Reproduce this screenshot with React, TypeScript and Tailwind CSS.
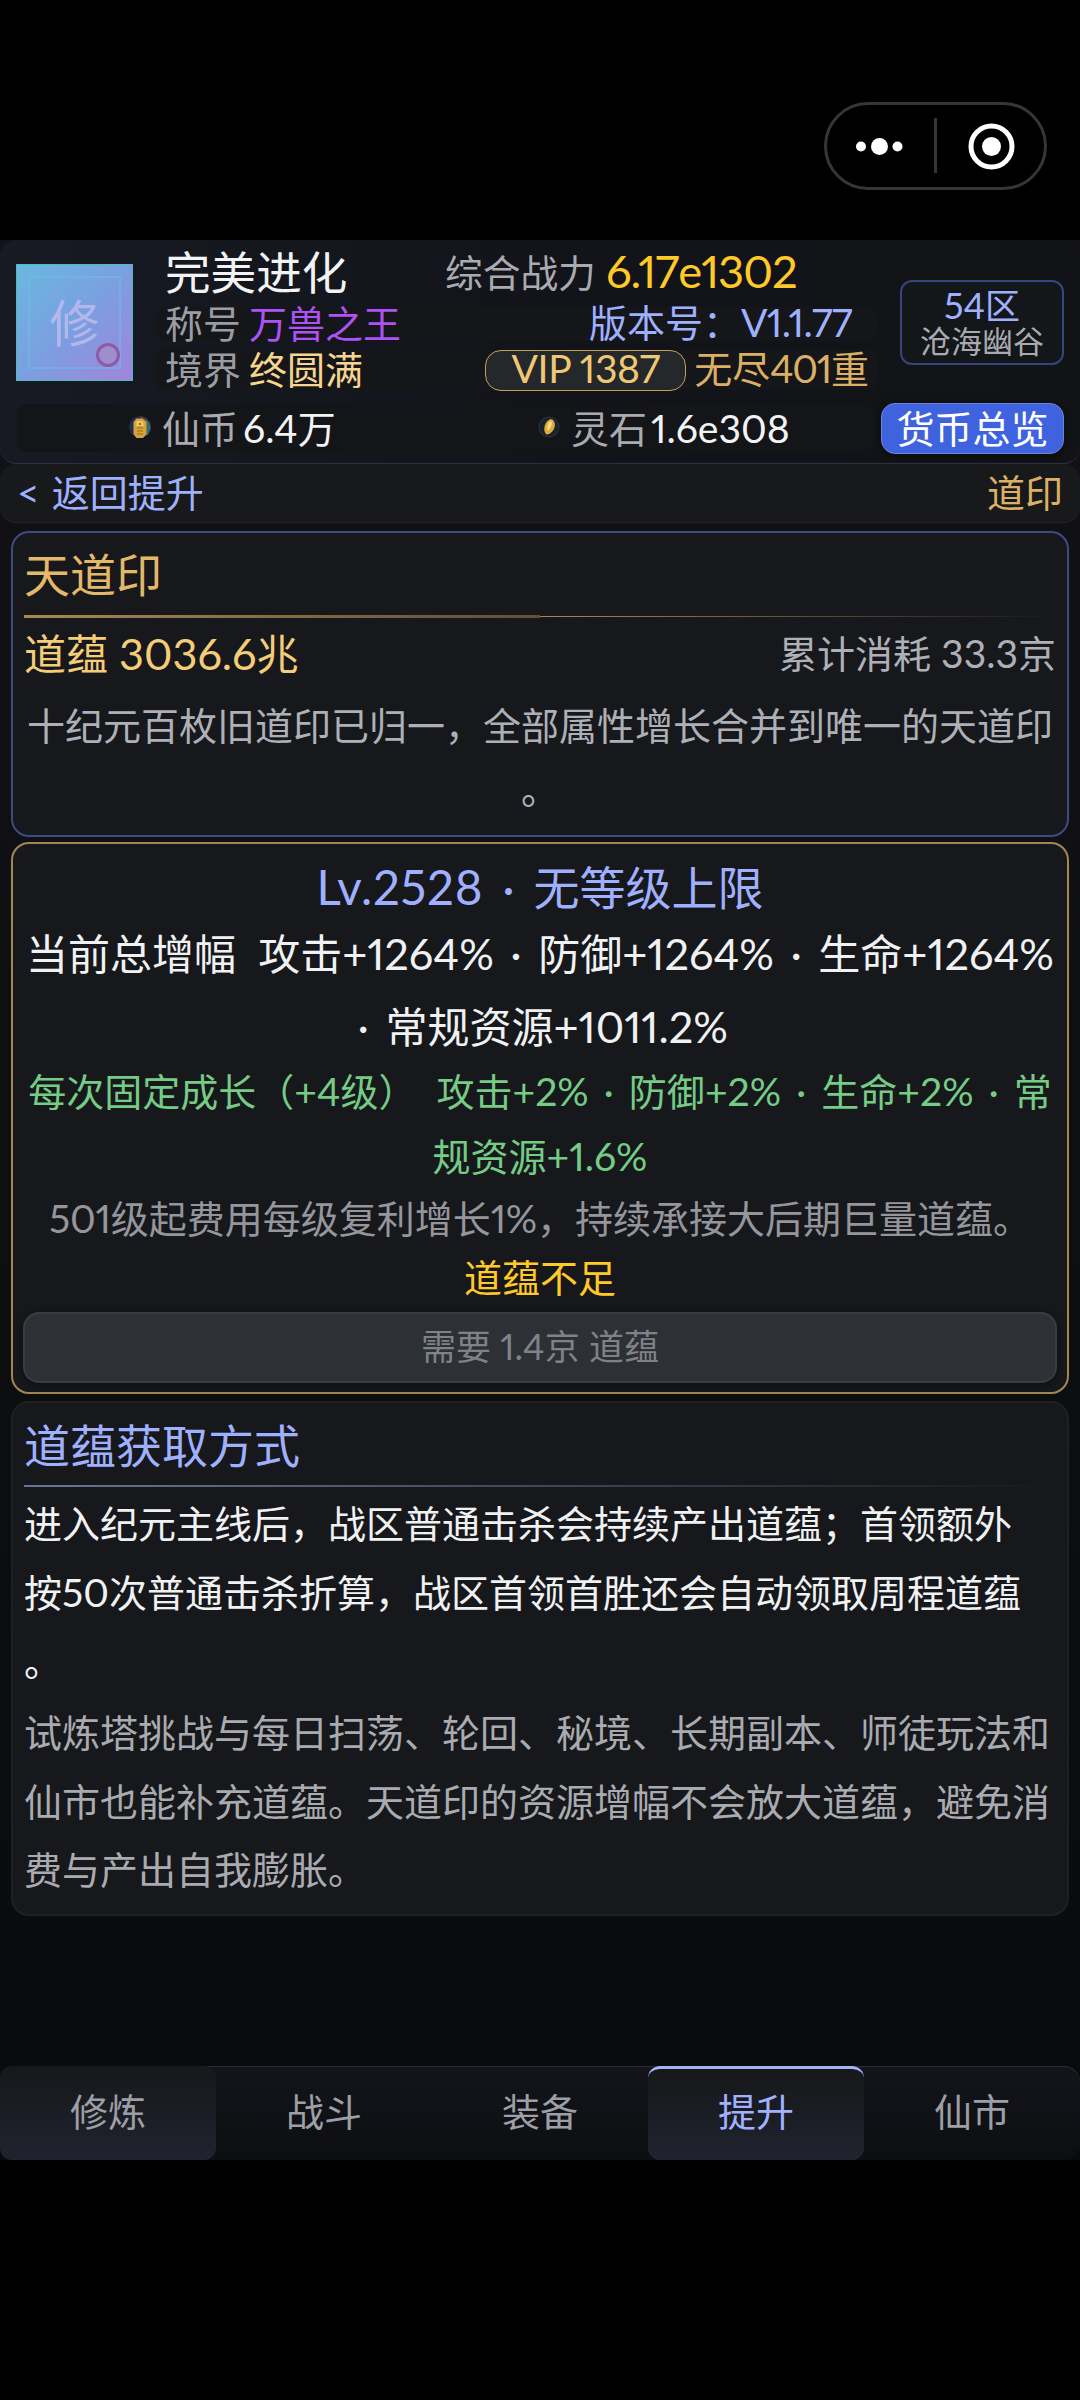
import React from "react";

/** Wraps Latin runs so that they take the Latin face next to Chinese text. */
function Mix({ children, latin = "" }: { children: string; latin?: string }) {
  const parts = children.split(/(·|[\x20-\x7e]+)/);
  return (
    <>
      {parts.map((part, i) => {
        if (part === "·") {
          return (
            <span key={i} className="px-[0.135em] font-[Lato] leading-none">
              ·
            </span>
          );
        }
        return i % 2 === 1 ? (
          <span
            key={i}
            className={`whitespace-pre font-[Lato] text-[1.03em] leading-none proportional-nums ${latin}`}
          >
            {part}
          </span>
        ) : (
          part
        );
      })}
    </>
  );
}

function Line({
  className = "",
  latin,
  children,
}: {
  className?: string;
  latin?: string;
  children: string;
}) {
  return (
    <div className={`whitespace-nowrap ${className}`}>
      <Mix latin={latin}>{children}</Mix>
    </div>
  );
}

function Capsule() {
  return (
    <div className="ml-[824px] mt-[102px] flex h-[88px] w-[223px] items-center rounded-full border-[3px] border-[#363636]">
      <svg width="217" height="82" viewBox="0 0 217 82">
        <circle cx="34" cy="41.500" r="5" fill="#fff" />
        <circle cx="52.500" cy="41.500" r="8.500" fill="#fff" />
        <circle cx="70.500" cy="41.500" r="5" fill="#fff" />
        <rect x="107" y="13" width="3" height="55" fill="#363636" />
        <circle cx="164.500" cy="41.500" r="20.500" fill="none" stroke="#fff" strokeWidth="5" />
        <circle cx="164.500" cy="41.500" r="9.500" fill="#fff" />
      </svg>
    </div>
  );
}

function Avatar() {
  return (
    <div className="relative ml-4 mt-6 size-[117px] shrink-0 border border-[#4fb9c0] bg-linear-[135deg,#69b8e0_0%,#7b9fe0_50%,#a085dc_100%] p-[11px]">
      <div className="flex size-full items-center justify-center border-2 border-[#6dbfe2]/50 pb-[6px] text-[50px] leading-none text-[#b3b8ec]">
        修
      </div>
      <div className="absolute bottom-[13px] right-[12px] size-[24px] rounded-full border-[3px] border-[#8f5aa8] bg-[#9c8fcb]" />
    </div>
  );
}

function CoinIcon() {
  return (
    <svg width="24" height="24" viewBox="0 0 24 24">
      <circle cx="12" cy="12" r="11" fill="#232d4a" />
      <path d="M17 3.500A11 11 0 0 1 22.500 14l-2 5-3 2z" fill="#3a6b62" />
      <path d="M12 1.500l5 1.500 1 3-5-1z" fill="#6b3f35" />
      <path d="M8.500 3.500h6l4 3.500v12l-3.500 4H8.500L5.500 19V7z" fill="#d6a23f" />
      <path d="M9 6h5l1.500 2v3H8.500V8z" fill="#f3cf6a" />
      <path d="M9 13h6M9 16h6M9 19h6" stroke="#9b6c1e" strokeWidth="1" />
      <circle cx="12" cy="9" r="1.400" fill="#a8772a" />
    </svg>
  );
}

function StoneIcon() {
  return (
    <svg width="22" height="22" viewBox="0 0 22 22">
      <circle cx="11" cy="11" r="10" fill="#1a2128" stroke="#2c3743" strokeWidth="1" />
      <path d="M13 3c3 1 4.500 4 3.500 8.500-1 3.500-4.500 7-8 7-2-2-3-5-1.500-9.500C8 6 10.500 3.500 13 3z" fill="#e0ab3c" />
      <path d="M13 5c1.500 2 1 6-3.500 9.500-.5-4 .5-8 3.500-9.500z" fill="#ffe493" />
    </svg>
  );
}

function Header() {
  return (
    <header className="h-[224px] rounded-2xl border-b border-[#2b3045] bg-linear-to-r from-[#171a23] via-[#13141a] to-[#121316]">
      <div className="flex h-[164px]">
        <Avatar />
        <div className="ml-[23px] w-[721px] pt-px">
          <div className="flex h-[66px] items-center pb-[7px] pl-[9px]">
            <div className="w-[280px] text-[45.6px] leading-none text-[#f2f3f5]">完美进化</div>
            <div className="w-[161px] text-[37.7px] leading-none text-[#a9abb1]">综合战力</div>
            <Line className="text-[44px] leading-none text-[#ffca28]" latin="tracking-[-1px]">
              6.17e1302
            </Line>
          </div>
          <div className="flex h-[34px] items-center rounded-lg bg-[#14161a] pl-[9px] pr-[25px] text-[38px] leading-[30px]">
            <div className="-mt-1 w-[84px] text-[#9b9da3]">称号</div>
            <div className="-mt-1 text-[#ae52f5]">万兽之王</div>
            <Line className="-mt-1 ml-auto text-[#9fb0ff]" latin="tracking-[-0.6px]">
              版本号：V1.1.77
            </Line>
          </div>
          <div className="mt-[9px] flex h-10 items-center rounded-lg bg-[#14161a] pl-[9px] pr-2 text-[38px] leading-[34px]">
            <div className="-mt-[5px] w-[84px] text-[#9b9da3]">境界</div>
            <div className="-mt-[5px] text-[#f5d590]">终圆满</div>
            <div className="ml-auto flex h-[41px] w-[201px] items-center justify-center rounded-2xl border border-[#c49f5a] bg-[#24282b] pb-1 leading-none text-[#f0c873]">
              <Line latin="tracking-[-0.4px]">VIP 1387</Line>
            </div>
            <Line className="-mt-[5px] ml-2 text-[#dcb064]" latin="tracking-[-1.3px]">
              无尽401重
            </Line>
          </div>
        </div>
        <div className="ml-[23px] mt-10 flex h-[85px] w-[164px] flex-col items-center rounded-xl border-2 border-[#35467f] bg-[#14171a] pt-[4px] text-[31px]">
          <Line className="text-[35px] leading-[36px] text-[#9fb0ff]">54区</Line>
          <div className="leading-[34px] text-[#a9abb1]">沧海幽谷</div>
        </div>
      </div>
      <div className="flex h-12 text-[38px] leading-[46px]">
        <div className="ml-[17px] flex w-[430px] items-center rounded-xl bg-[#131518] pb-[3px] pl-[111px]">
          <CoinIcon />
          <div className="ml-[10px] w-[81px] text-[#a9abb1]">仙币</div>
          <Line className="text-[#f2f3f5]">6.4万</Line>
        </div>
        <div className="flex w-[428px] items-center rounded-xl bg-[#131518] pb-[3px] pl-[91px]">
          <StoneIcon />
          <div className="ml-[11px] w-[80px] text-[#a9abb1]">灵石</div>
          <Line className="text-[#f2f3f5]">1.6e308</Line>
        </div>
        <button className="-mt-px ml-[6px] h-[51px] w-[183px] rounded-[14px] border border-[#6d85d8] bg-[#3f63de] pb-[3px] text-[38px] leading-[46px] text-white shadow-[0_2px_8px_rgba(0,0,0,0.5)]">
          货币总览
        </button>
      </div>
    </header>
  );
}

function SubBar() {
  return (
    <div className="flex h-[59px] items-center justify-between rounded-2xl border-b border-[#222429] bg-[#17191b] pb-1 pl-[17px] pr-[17px] text-[38px] leading-[54px]">
      <Line className="text-[#9fb0ff]" latin="tracking-[1px]">{"< 返回提升"}</Line>
      <div className="text-[#dcb064]">道印</div>
    </div>
  );
}

function SealCard() {
  return (
    <section className="mt-2 h-[306px] rounded-[18px] border-2 border-[#3c4b82] bg-[#17181c] px-[11px]">
      <h2 className="h-[82px] text-[46px] leading-[79px] text-[#e3b868]">天道印</h2>
      <div className="flex">
        <div className="h-[3px] w-1/2 bg-linear-to-r from-[#a98850] to-[#5f5038]" />
        <div className="mt-px h-px w-1/2 bg-linear-to-r from-[#a98850] to-transparent" />
      </div>
      <div className="flex h-[72px] items-center justify-between pb-[5px]">
        <Line className="text-[42px]">
          道蕴 3036.6兆
        </Line>
        <Line className="text-[38px] text-[#aeb0b7]">累计消耗 33.3京</Line>
      </div>
      <div className="mt-[2px] text-center text-[38px] leading-[64px] text-[#aeb0b7]">
        <div className="whitespace-nowrap">十纪元百枚旧道印已归一，全部属性增长合并到唯一的天道印</div>
        <div>。</div>
      </div>
    </section>
  );
}

function LevelCard() {
  return (
    <section className="mt-[5px] h-[552px] rounded-[18px] border-2 border-[#a48650] bg-[#17181c] px-[10px] text-center">
      <Line
        className="h-[71px] pt-[5px] text-[46px] leading-[72px] text-[#9fb0ff]"
        latin="tracking-[0.8px]"
      >
        Lv.2528 · 无等级上限
      </Line>
      <div className="text-[42px] leading-[73px] text-[#f0f1f3]">
        <Line className="-mx-2">当前总增幅  攻击+1264% · 防御+1264% · 生命+1264%</Line>
        <Line>· 常规资源+1011.2%</Line>
      </div>
      <div className="-mt-1 text-[38px] leading-[65px] text-[#75cc85]">
        <Line className="-mx-2">每次固定成长（+4级）  攻击+2% · 防御+2% · 生命+2% · 常</Line>
        <Line>规资源+1.6%</Line>
      </div>
      <Line className="text-[38px] leading-[60px] text-[#94969c]" latin="tracking-[-0.3px]">
        501级起费用每级复利增长1%，持续承接大后期巨量道蕴。
      </Line>
      <div className="h-[65px] text-[38px] leading-[57px] text-[#ffca28]">道蕴不足</div>
      <button className="block h-[71px] w-full rounded-[16px] border-2 border-[#393c42] bg-[#2d3035] pb-[5px] text-[35px] leading-[62px] text-[#7f8289] shadow-[0_2px_10px_rgba(0,0,0,0.45)]">
        <Mix>需要 1.4京 道蕴</Mix>
      </button>
    </section>
  );
}

function SourceCard() {
  return (
    <section className="mt-[7px] h-[515px] rounded-[18px] border-2 border-[#1e2023] bg-[#17181b] px-[11px]">
      <h2 className="h-[82px] text-[46px] leading-[80px] text-[#9fb0ff]">道蕴获取方式</h2>
      <div className="h-[2px] bg-linear-to-r from-[#6b7596] to-transparent" />
      <div className="text-[38px] leading-[69px] text-[#f0f1f3]">
        <div className="whitespace-nowrap">进入纪元主线后，战区普通击杀会持续产出道蕴；首领额外</div>
        <Line>按50次普通击杀折算，战区首领首胜还会自动领取周程道蕴</Line>
        <div>。</div>
      </div>
      <div className="mt-[3px] whitespace-nowrap text-[38px] leading-[68.500px] text-[#a9abb1]">
        <div>试炼塔挑战与每日扫荡、轮回、秘境、长期副本、师徒玩法和</div>
        <div>仙市也能补充道蕴。天道印的资源增幅不会放大道蕴，避免消</div>
        <div>费与产出自我膨胀。</div>
      </div>
    </section>
  );
}

const tabs = [
  {
    label: "修炼",
    style: "bg-linear-to-b from-[#16181a] to-[#20222f] text-[#9c9fa5] rounded-xl leading-[88px]",
  },
  { label: "战斗", style: "text-[#9c9fa5] leading-[88px]" },
  { label: "装备", style: "text-[#9c9fa5] leading-[88px]" },
  {
    label: "提升",
    style:
      "bg-linear-to-b from-[#16181a] to-[#20222f] text-[#a0b2ff] rounded-xl border-t-[3px] border-[#a0b4fb] leading-[82px]",
  },
  { label: "仙市", style: "text-[#9c9fa5] leading-[88px]" },
];

function TabBar() {
  return (
    <nav className="mt-auto flex h-[94px] rounded-2xl bg-linear-to-b from-[#14151a] to-[#0d0e12] shadow-[inset_0_1px_0_#2a2c33]">
      {tabs.map((tab) => (
        <div key={tab.label} className={`flex flex-1 justify-center text-[38px] ${tab.style}`}>
          {tab.label}
        </div>
      ))}
    </nav>
  );
}

export default function App() {
  return (
    <div className="h-[2400px] w-[1080px] overflow-hidden bg-black font-['Noto_Sans_CJK_SC',sans-serif] text-[#f5cd78]">
      <div className="flex h-[240px] items-start">
        <Capsule />
      </div>
      <div className="flex h-[1920px] flex-col bg-linear-to-b from-[#121217] via-[#0e0f11] to-[#090a0c]">
        <Header />
        <SubBar />
        <main className="px-[11px]">
          <SealCard />
          <LevelCard />
          <SourceCard />
        </main>
        <TabBar />
      </div>
    </div>
  );
}
